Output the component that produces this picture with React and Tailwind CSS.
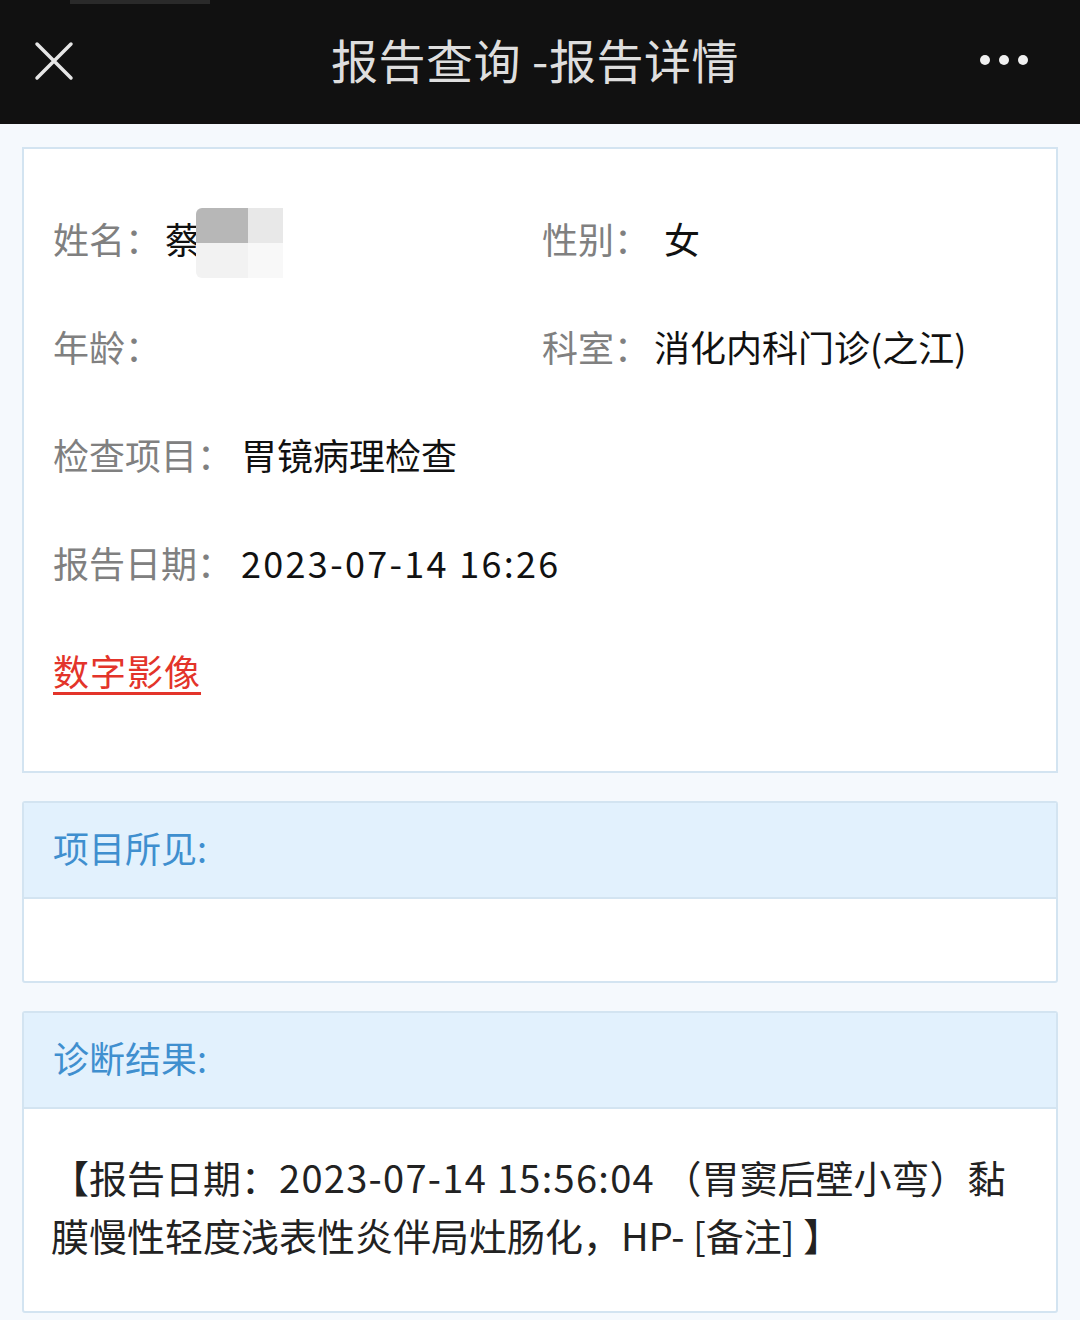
// 报告详情页：顶部导航 + 基本信息卡片 + 项目所见 / 诊断结果两个分区
const font = "font-['Noto_Sans_CJK_SC','Noto_Sans',sans-serif]";

function InfoRow({ label, value, valueGap = "" }) {
  return (
    <div className="flex items-center h-[108px]">
      <span className="text-[#808080]">{label}</span>
      <span className={`text-[#111] ${valueGap}`}>{value}</span>
    </div>
  );
}

function Section({ title, children, bodyClass }) {
  return (
    <div className="mx-[22px] border-2 border-[#d3e4f1] rounded-[3px] bg-white overflow-hidden">
      <div className="h-[96px] bg-[#e2f1fd] border-b-2 border-[#d3e4f1] flex items-center px-[29px]">
        <span className="text-[#3f8fcf] text-[36px] -mt-[7px]">{title}</span>
      </div>
      <div className={bodyClass}>{children}</div>
    </div>
  );
}

export default function App() {
  return (
    <div className={`${font} w-[1080px] min-h-[1320px] bg-[#f5f9fd]`}>
      {/* 顶部导航栏 */}
      <div className="relative h-[124px] bg-[#111111] flex items-center justify-center">
        <div className="absolute left-[70px] top-0 w-[140px] h-[4px] bg-[#2a2a2a]" />
        <svg
          className="absolute left-[34px] top-[41px]"
          width="40"
          height="40"
          viewBox="0 0 40 40"
          fill="none"
          stroke="#e6e6e6"
          strokeWidth="3.5"
          strokeLinecap="round"
        >
          <path d="M3 3 L37 37 M37 3 L3 37" />
        </svg>
        <span className="text-[#dedede] text-[47px] tracking-[0.5px] -mt-[6px] -ml-[10px]">报告查询 -报告详情</span>
        <div className="absolute right-[52px] top-[55px] flex gap-[9px]">
          <span className="w-[10px] h-[10px] rounded-full bg-[#f0f0f0]" />
          <span className="w-[10px] h-[10px] rounded-full bg-[#f0f0f0]" />
          <span className="w-[10px] h-[10px] rounded-full bg-[#f0f0f0]" />
        </div>
      </div>

      <div className="h-[23px]" />

      {/* 基本信息 */}
      <div className="mx-[22px] border-2 border-[#d3e4f1] bg-white text-[36px] px-[29px] pt-[35px] pb-[47px]">
        <div className="grid grid-cols-[489px_1fr]">
          <div className="relative">
            <InfoRow label="姓名：" value="蔡" valueGap="ml-[4px]" />
            {/* 马赛克遮挡 */}
            <div className="absolute left-[143px] top-[24px] grid grid-cols-[52px_35px] grid-rows-[35px_35px]">
              <span className="bg-[#b7b7b7] rounded-tl-[6px]" />
              <span className="bg-[#e8e8e8]" />
              <span className="bg-[#f2f2f2] rounded-bl-[6px]" />
              <span className="bg-[#f8f8f8]" />
            </div>
          </div>
          <InfoRow label="性别：" value="女" valueGap="ml-[14px]" />
          <InfoRow label="年龄：" value="" />
          <InfoRow label="科室：" value="消化内科门诊(之江)" valueGap="ml-[4px]" />
        </div>
        <InfoRow label="检查项目：" value="胃镜病理检查" valueGap="ml-[8px]" />
        <InfoRow
          label="报告日期："
          value={<span className="tracking-[2.3px]">2023-07-14 16:26</span>}
          valueGap="ml-[8px]"
        />
        <div className="flex items-center h-[108px]">
          <a className="text-[#e3342a] underline decoration-[3px] underline-offset-[6px] tracking-[1px]">数字影像</a>
        </div>
      </div>

      <div className="h-[28px]" />

      <Section title="项目所见:" bodyClass="h-[82px]" />

      <div className="h-[28px]" />

      <Section
        title="诊断结果:"
        bodyClass="px-[27px] pt-[39px] pb-[37px] h-[202px] text-[38px] leading-[58px] text-[#222] whitespace-nowrap"
      >
        【报告日期：<span className="tracking-[1.3px]">2023-07-14 15:56:04</span> （胃窦后壁小弯）黏
        <br />
        膜慢性轻度浅表性炎伴局灶肠化，HP- [备注] 】
      </Section>
    </div>
  );
}
